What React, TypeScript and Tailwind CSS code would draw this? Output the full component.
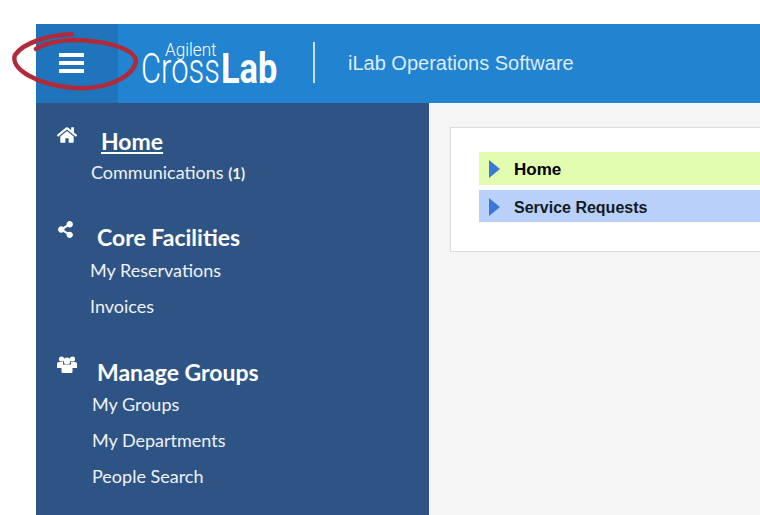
import { FaHome, FaShareAlt } from "react-icons/fa";

function Arrow() {
  return (
    <svg width="11" height="18" viewBox="0 0 11 18" className="shrink-0">
      <path d="M0 0 L11 9 L0 18 Z" fill="#3b78d6" />
    </svg>
  );
}

function Group() {
  return (
    <svg width="20" height="18" viewBox="0 0 20 18" fill="white">
      <circle cx="4.5" cy="3" r="2.6" />
      <circle cx="15.5" cy="3" r="2.6" />
      <circle cx="10" cy="5" r="3.4" />
      <path d="M0 7.5 Q0 6 2 6 H6 L6 12 H0 Z" />
      <path d="M20 7.5 Q20 6 18 6 H14 L14 12 H20 Z" />
      <path d="M4.5 11 Q4.5 8.6 7 8.6 H13 Q15.5 8.6 15.5 11 V15.5 Q15.5 17 14 17 H6 Q4.5 17 4.5 15.5 Z" />
    </svg>
  );
}

function Section({ icon, title, items, titleClass, itemClass, listClass, underline, className }: { icon: React.ReactNode; title: string; items: React.ReactNode[]; titleClass: string; itemClass: string; listClass: string; underline?: boolean; className: string }) {
  return (
    <div className={className}>
      <div className="flex h-[28px] items-start">
        <div className="-mt-[2px] w-[21px] shrink-0 text-white">{icon}</div>
        <div className={`${titleClass} text-[23px] leading-[28px] font-bold whitespace-nowrap text-white ${underline ? "underline decoration-2 underline-offset-2" : ""}`}>{title}</div>
      </div>
      <div className={`${listClass} flex flex-col gap-[12px]`}>
        {items.map((it, i) => (
          <div key={i} className={`${itemClass} h-[24px] text-[18px] leading-[24px] text-[#eef2f8]`}>{it}</div>
        ))}
      </div>
    </div>
  );
}

export default function App() {
  return (
    <div className="relative h-[515px] w-[760px] overflow-hidden bg-white pt-[24px] pl-[36px] [font-family:Lato,sans-serif]">
      <header className="flex h-[79px] bg-[#2283d0]">
        <div className="flex w-[82px] items-center justify-center bg-[#1f74bc] pr-[12px]">
          <div className="flex w-[25px] flex-col gap-[4px] pb-[2px]">
            <div className="h-[4px] bg-white" />
            <div className="h-[4px] bg-white" />
            <div className="h-[4px] bg-white" />
          </div>
        </div>
        <div className="ml-[23px] w-[172px] pt-[19px] text-white [font-family:Roboto,sans-serif]">
          <div className="ml-[24px] h-[14px] origin-left scale-x-[0.9] text-[19px] leading-[14px] font-light whitespace-nowrap">Agilent</div>
          <div className="flex h-[22px] text-[43px] leading-[22px] whitespace-nowrap">
            <span className="block w-[80px] origin-left scale-x-[0.72] font-light">Cross</span>
            <span className="block w-[56px] origin-left scale-x-[0.8] font-bold">Lab</span>
          </div>
        </div>
        <div className="mt-[18px] h-[41px] w-[2px] bg-[#c8e0f4]" />
        <div className="ml-[33px] flex items-center pb-[2px] text-[20px] text-[#dcecf8] [font-family:'Liberation_Sans',sans-serif]">iLab Operations Software</div>
      </header>
      <div className="flex h-[412px]">
        <aside className="w-[393px] shrink-0 bg-[#2e5485] pt-[24px] pl-[21px]">
          <Section
            className=""
            icon={<FaHome className="h-[20px] w-[20px]" />}
            title="Home"
            titleClass="ml-[23px]"
            itemClass="ml-[34px]"
            listClass="mt-[5px]"
            underline
            items={[<span>Communications <span className="text-[15px] font-bold">(1)</span></span>]}
          />
          <Section
            className="mt-[39px]"
            icon={<FaShareAlt className="h-[17px] w-[17px]" />}
            title="Core Facilities"
            titleClass="ml-[19px]"
            itemClass="ml-[33px]"
            listClass="mt-[7px]"
            items={["My Reservations", "Invoices"]}
          />
          <Section
            className="mt-[40px]"
            icon={<Group />}
            title="Manage Groups"
            titleClass="ml-[19px]"
            itemClass="ml-[35px]"
            listClass="mt-[6px]"
            items={["My Groups", "My Departments", "People Search"]}
          />
        </aside>
        <main className="flex-1 bg-[#f5f5f5] pt-[24px] pl-[21px]">
          <div className="flex h-[125px] flex-col gap-[5px] border border-r-0 border-[#dcdcdc] bg-white pt-[24px] pl-[28px] font-bold text-black [font-family:'Liberation_Sans',sans-serif]">
            <div className="flex h-[33px] items-center gap-[14px] bg-[#e2fdb0] pt-[1px] pl-[10px] text-[17px]">
              <Arrow />
              <span className="pt-[2px]">Home</span>
            </div>
            <div className="flex h-[32px] items-center gap-[14px] bg-[#b8d0fa] pt-[1px] pl-[10px] text-[16px] text-[#141a24]">
              <Arrow />
              <span className="pt-[2px]">Service Requests</span>
            </div>
          </div>
        </main>
      </div>
      <svg className="pointer-events-none absolute top-0 left-0" width="150" height="100" viewBox="0 0 150 100" fill="none">
        <path
          d="M72 34 C50 35 24 42 15 55 C10 68 35 85 75 88 C110 90 134 75 136 61 C134 48 105 40 70 40 C55 41 44 44 36 49"
          stroke="#b02a3a"
          strokeWidth="4.5"
          strokeLinecap="round"
        />
      </svg>
    </div>
  );
}
